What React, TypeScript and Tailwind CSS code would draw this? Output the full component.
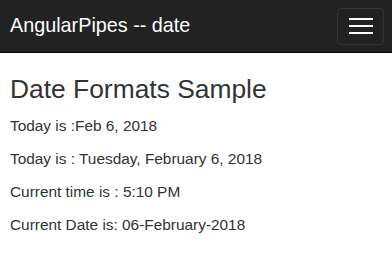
export default function App() {
  return (
    <div className="min-h-screen bg-white" style={{ fontFamily: '"Liberation Sans", Arial, sans-serif' }}>
      <nav className="h-[53px] bg-[#222] border-b border-[#080808] flex items-center justify-between pl-[10px] pr-[8px]">
        <span className="text-[19.8px] text-white leading-none">AngularPipes -- date</span>
        <button className="w-[47px] h-[37px] border border-[#333] rounded-[4px] flex flex-col items-center justify-center gap-[5px]">
          <span className="block w-[24px] h-[2px] bg-white" />
          <span className="block w-[24px] h-[2px] bg-white" />
          <span className="block w-[24px] h-[2px] bg-white" />
        </button>
      </nav>
      <main className="px-[10px] text-[#333]">
        <h1 className="text-[26.4px] leading-[1.1] mt-[22px] mb-[11px]">Date Formats Sample</h1>
        <p className="text-[15.4px] leading-[22px] mb-[11px]">Today is :Feb 6, 2018</p>
        <p className="text-[15.4px] leading-[22px] mb-[11px]">Today is : Tuesday, February 6, 2018</p>
        <p className="text-[15.4px] leading-[22px] mb-[11px]">Current time is : 5:10 PM</p>
        <p className="text-[15.4px] leading-[22px] mb-[11px]">Current Date is: 06-February-2018</p>
      </main>
    </div>
  );
}
